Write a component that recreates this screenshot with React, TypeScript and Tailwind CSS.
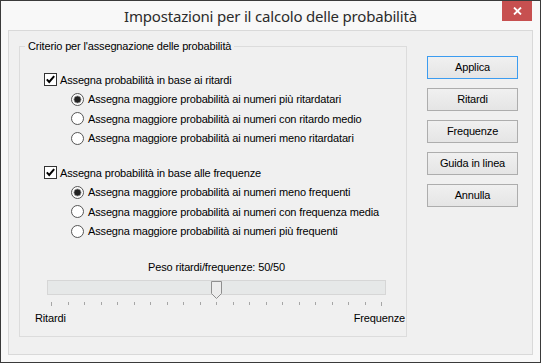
import React from 'react';

const CheckBox: React.FC = () => (
  <svg width="13" height="13" viewBox="0 0 13 13" className="shrink-0">
    <rect x="0.5" y="0.5" width="12" height="12" fill="#ffffff" stroke="#333333" />
    <path d="M2.8 6.4 L5.2 8.9 L10.2 3.2" fill="none" stroke="#000000" strokeWidth="2" />
  </svg>
);

const Radio: React.FC<{ checked?: boolean }> = ({ checked }) => (
  <svg width="13" height="13" viewBox="0 0 13 13" className="shrink-0">
    <circle cx="6.5" cy="6.5" r="6" fill="#ffffff" stroke="#555555" />
    {checked && <circle cx="6.5" cy="6.5" r="3.6" fill="#222222" stroke="#9a9a9a" strokeWidth="0.8" />}
  </svg>
);

const Button: React.FC<{ label: string; primary?: boolean }> = ({ label, primary }) => (
  <div
    className={
      'h-[23px] w-[91px] flex items-center justify-center border bg-gradient-to-b from-[#f0f0f0] to-[#e5e5e5] text-[11px] text-black ' +
      (primary ? 'border-[#3c9cf0]' : 'border-[#adadad]')
    }
  >
    {label}
  </div>
);

const ritardi = [
  'Assegna maggiore probabilità ai numeri più ritardatari',
  'Assegna maggiore probabilità ai numeri con ritardo medio',
  'Assegna maggiore probabilità ai numeri meno ritardatari',
];

const frequenze = [
  'Assegna maggiore probabilità ai numeri meno frequenti',
  'Assegna maggiore probabilità ai numeri con frequenza media',
  'Assegna maggiore probabilità ai numeri più frequenti',
];

export default function App() {
  const ticks = Array.from({ length: 21 }, (_, i) => i);

  return (
    <div className="w-[541px] h-[363px] bg-[#f8f8f8] border border-[#3a3a3a] flex flex-col font-['Liberation_Sans',Arial,sans-serif]">
      {/* title bar */}
      <div className="relative h-[29px] shrink-0 flex items-center justify-center">
        <span className="text-[15px] text-[#2b2b2b] font-['Noto_Sans',sans-serif] tracking-[-0.2px] pt-[1px]">
          Impostazioni per il calcolo delle probabilità
        </span>
        <div className="absolute right-[8px] top-0 w-[30px] h-[20px] bg-[#c75050] flex items-center justify-center">
          <svg width="9" height="8" viewBox="0 0 9 8">
            <path d="M1 0.5 L8 7.5 M8 0.5 L1 7.5" stroke="#ffffff" strokeWidth="1.8" />
          </svg>
        </div>
      </div>

      {/* client area */}
      <div className="mx-[7px] mb-[7px] flex-1 border border-[#d9d9d9] bg-[#f0f0f0] flex text-[11px] text-black tracking-[-0.15px]">
        {/* group box */}
        <div className="relative ml-[10px] mt-[15px] w-[388px] h-[291px] border border-[#dcdcdc] flex flex-col">
          <span className="absolute left-[5px] top-[-8px] px-[3px] bg-[#f0f0f0] leading-[14px]">
            Criterio per l'assegnazione delle probabilità
          </span>

          <div className="pt-[23px] flex flex-col">
            <div className="h-[19.5px] flex items-center pl-[24px] gap-[3px]">
              <CheckBox />
              <span>Assegna probabilità in base ai ritardi</span>
            </div>
            {ritardi.map((t, i) => (
              <div key={t} className="h-[19.5px] flex items-center pl-[51px] gap-[4px]">
                <Radio checked={i === 0} />
                <span>{t}</span>
              </div>
            ))}

            <div className="mt-[15px] h-[19.5px] flex items-center pl-[24px] gap-[3px]">
              <CheckBox />
              <span>Assegna probabilità in base alle frequenze</span>
            </div>
            {frequenze.map((t, i) => (
              <div key={t} className="h-[19.5px] flex items-center pl-[51px] gap-[4px]">
                <Radio checked={i === 0} />
                <span>{t}</span>
              </div>
            ))}
          </div>

          {/* slider */}
          <div className="mt-[20px] pl-[27px] w-[366px] flex flex-col">
            <div className="h-[13px] leading-[13px] text-center">Peso ritardi/frequenze: 50/50</div>
            <div className="relative mt-[6px] h-[15px] border border-[#d6d6d6] bg-[#e6e8e8]">
              <svg width="11" height="18" viewBox="0 0 11 18" className="absolute left-[163px] top-0">
                <path d="M0.5 0.5 H10.5 V12.5 L5.5 17.5 L0.5 12.5 Z" fill="#ececec" stroke="#8f8f8f" />
              </svg>
            </div>
            <div className="mt-[7px] px-[4px] flex justify-between">
              {ticks.map((i) => (
                <div key={i} className={'w-px bg-[#a6a6a6] ' + (i === 0 || i === 20 ? 'h-[4px]' : 'h-[3px]')} />
              ))}
            </div>
          </div>
          <div className="mt-[6px] pl-[15px] pr-[1px] flex justify-between leading-[13px]">
            <span>Ritardi</span>
            <span>Frequenze</span>
          </div>
        </div>

        {/* buttons */}
        <div className="ml-[20px] mt-[25px] flex flex-col gap-[9px]">
          <Button label="Applica" primary />
          <Button label="Ritardi" />
          <Button label="Frequenze" />
          <Button label="Guida in linea" />
          <Button label="Annulla" />
        </div>
      </div>
    </div>
  );
}
